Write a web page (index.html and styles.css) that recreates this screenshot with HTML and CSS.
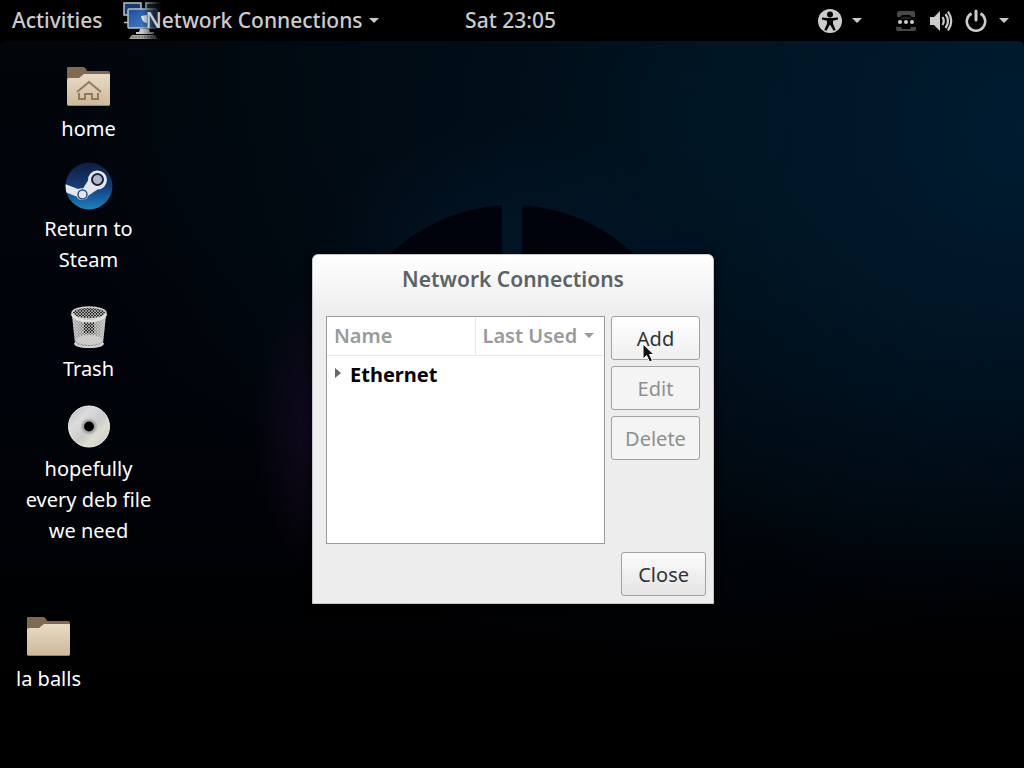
FILE: index.html
```html
<!DOCTYPE html>
<html lang="en">
<head>
<meta charset="utf-8">
<title>Network Connections</title>
<link rel="stylesheet" href="styles.css">
</head>
<body>
<header class="panel">
  <nav class="panel-left">
    <button class="panel-button">Activities</button>
    <button class="panel-button app-menu">
      <svg class="app-icon" width="38" height="38" viewBox="0 0 38 38" aria-hidden="true">
        <defs>
          <linearGradient id="screen" x1="0" y1="0" x2="1" y2="1"><stop offset="0" stop-color="#1c4f9c"/><stop offset="1" stop-color="#4a86cf"/></linearGradient>
        </defs>
        <g stroke="#b9c4c4" stroke-width="1.5">
          <rect x="1" y="1" width="17" height="12" fill="#173c70"/>
          <rect x="23" y="1" width="14" height="12" fill="#222d3a"/>
          <path d="M1 20.500h5"/>
          <rect x="5" y="7" width="29" height="19" rx="1" fill="url(#screen)"/>
        </g>
        <path d="M18 14q1 7 6 7v-8z" fill="#dde5ee"/>
        <path d="M17 27h9l1 3h4v2H13v-2h3z" fill="#c9cbc8"/>
        <path d="M9 33h23l3 4H6z" fill="#a5a7a3"/>
        <path d="M9 35h22" stroke="#555" stroke-dasharray="2 1"/>
      </svg>
      <span class="app-name">Network Connections</span>
      <svg width="10" height="5" viewBox="0 0 10 5" aria-hidden="true"><path d="M0 0h10L5 5z" fill="currentColor"/></svg>
    </button>
  </nav>
  <button class="panel-button clock">Sat 23:05</button>
  <div class="panel-right">
    <button class="panel-button a11y" aria-label="Accessibility">
      <svg width="24" height="24" viewBox="0 0 24 24"><circle cx="12" cy="12" r="12" fill="currentColor"/><circle cx="12" cy="5.500" r="3" fill="#000"/><path d="M4 8.500l6 .5h4l6-.5v2l-5 1.200v3L17.700 21l-2.200.8L12.300 16h-.6l-3.200 5.800-2.200-.8L9 14.700v-3l-5-1.200z" fill="#000"/></svg>
      <svg width="10" height="5" viewBox="0 0 10 5"><path d="M0 0h10L5 5z" fill="currentColor"/></svg>
    </button>
    <button class="panel-button system" aria-label="System menu">
      <svg width="22" height="22" viewBox="0 0 22 22"><path d="M2 7V3q0-2 2-2h14q2 0 2 2v4h-3.500L15 5H7L5.500 7zM1 17h5l1 2h8l1-2h5v2q0 2-2 2H3q-2 0-2-2z" fill="#484848"/><path d="M5 9l2-2h8l2 2z" fill="#222"/><g fill="currentColor"><circle cx="5" cy="12" r="2"/><circle cx="11" cy="12" r="2"/><circle cx="17" cy="12" r="2"/></g></svg>
      <svg width="24" height="22" viewBox="0 0 24 22"><path d="M1 7h4l6-6v20l-6-6H1z" fill="currentColor"/><g fill="none" stroke="currentColor" stroke-width="2.200"><path d="M13.500 7q2.500 4 0 8"/><path d="M16.500 4q5 7 0 14"/><path d="M19 1.500q6.500 9.500 0 19"/></g></svg>
      <svg width="22" height="24" viewBox="0 0 22 24"><g fill="none" stroke="currentColor" stroke-width="2.600"><path d="M6.500 4.500a9.200 9.200 0 1 0 9 0"/><path d="M11 2v9" stroke-linecap="round" stroke-width="3"/></g></svg>
      <svg width="10" height="5" viewBox="0 0 10 5"><path d="M0 0h10L5 5z" fill="currentColor"/></svg>
    </button>
  </div>
</header>

<main class="desktop">
  <svg class="emblem" width="352" height="352" viewBox="0 0 352 352" aria-hidden="true">
    <path d="M166 .3A176 176 0 0 0 166 351.700zM186 .3A176 176 0 0 1 186 351.700z" fill="#01030c"/>
  </svg>

  <a class="launcher home" href="#home">
    <svg width="48" height="48" viewBox="0 0 48 48" aria-hidden="true">
      <defs><linearGradient id="paper" x1="0" y1="0" x2="0" y2="1"><stop offset="0" stop-color="#e9dbc5"/><stop offset="1" stop-color="#cdb898"/></linearGradient></defs>
      <path d="M2 17V6q0-1 1-1h15q2 0 3 2l1 2h21q2 0 2 2v10H2z" fill="#806a50"/>
      <path d="M2 18q0-2 2-2h10l5-4h25q1 0 1 1v29q0 2-2 2H4q-2 0-2-2z" fill="url(#paper)"/>
      <path d="M3 43.500h41" stroke="#9a8567"/>
      <path d="M12 30l12-10 12 10M14 31v6h6v-5h7v5h6v-6" fill="none" stroke="#927b5c" stroke-width="2"/>
    </svg>
    <span>home</span>
  </a>
  <a class="launcher steam" href="#steam">
    <svg width="48" height="48" viewBox="0 0 48 48" aria-hidden="true">
      <defs>
        <linearGradient id="sky" x1="0" y1="0" x2="0" y2="1"><stop offset="0" stop-color="#111b3a"/><stop offset=".5" stop-color="#123d77"/><stop offset="1" stop-color="#1c83c0"/></linearGradient>
        <clipPath id="disk"><circle cx="24" cy="24" r="23.500"/></clipPath>
      </defs>
      <g clip-path="url(#disk)">
        <rect width="48" height="48" fill="url(#sky)"/>
        <path d="M0 22l13 5q3-1 5-.5l5-8a9.500 9.500 0 1 1 9.500 9l-9 6a6.500 6.500 0 0 1-12 1L0 30z" fill="#e4e6ec"/>
      </g>
      <circle cx="32.500" cy="17.500" r="5.500" fill="#aeb7c6" stroke="#19243e" stroke-width="2"/>
      <circle cx="17.500" cy="32.500" r="4.500" fill="none" stroke="#2b508c" stroke-width="1.500"/>
    </svg>
    <span>Return to Steam</span>
  </a>
  <a class="launcher trash" href="#trash">
    <svg width="48" height="48" viewBox="0 0 48 48" aria-hidden="true">
      <defs>
        <linearGradient id="tin" x1="0" y1="0" x2="1" y2="0"><stop offset="0" stop-color="#b4b4b1"/><stop offset=".4" stop-color="#80807e"/><stop offset=".6" stop-color="#858583"/><stop offset="1" stop-color="#bdbdba"/></linearGradient>
        <pattern id="mesh" width="3" height="3" patternUnits="userSpaceOnUse"><path d="M0 0l3 3M3 0L0 3" stroke="#d9d9d6" stroke-width=".6"/></pattern>
      </defs>
      <path d="M7 13l3 28q0 4 14 4t14-4l3-28z" fill="url(#tin)"/>
      <path d="M19 17h10v14H19z" fill="#30302f"/>
      <ellipse cx="24" cy="38" rx="13" ry="5" fill="#c5c5c2"/>
      <path d="M7 13l3 28q0 4 14 4t14-4l3-28z" fill="url(#mesh)"/>
      <ellipse cx="24" cy="11" rx="17" ry="6" fill="#353534"/>
      <ellipse cx="24" cy="11" rx="17" ry="6" fill="url(#mesh)" stroke="#d4d4d1" stroke-width="1.500"/>
      <path d="M7 12q3 7 17 7t17-7" fill="none" stroke="#e1e1de" stroke-width="3"/>
      <path d="M10 41q0 4 14 4t14-4" fill="none" stroke="#d5d5d2" stroke-width="2"/>
    </svg>
    <span>Trash</span>
  </a>
  <a class="launcher disc" href="#disc">
    <svg width="48" height="48" viewBox="0 0 48 48" aria-hidden="true">
      <defs><linearGradient id="foil" x1="0" y1="0" x2="1" y2="1"><stop offset="0" stop-color="#b8b8b8"/><stop offset=".3" stop-color="#dcdcdc"/><stop offset=".55" stop-color="#cacaca"/><stop offset=".7" stop-color="#dedecf"/><stop offset="1" stop-color="#c4c4c4"/></linearGradient></defs>
      <circle cx="24" cy="24.500" r="20.500" fill="url(#foil)" stroke="#eee" stroke-width="1"/>
      <circle cx="24" cy="24.500" r="7.500" fill="#a9a9aa" stroke="#bbb"/>
      <circle cx="24" cy="24.500" r="5" fill="#000"/>
    </svg>
    <span>hopefully every deb file we need</span>
  </a>
  <a class="launcher folder" href="#folder">
    <svg width="48" height="48" viewBox="0 0 48 48" aria-hidden="true">
      <path d="M2 17V6q0-1 1-1h15q2 0 3 2l1 2h21q2 0 2 2v10H2z" fill="#806a50"/>
      <path d="M2 18q0-2 2-2h10l5-4h25q1 0 1 1v29q0 2-2 2H4q-2 0-2-2z" fill="url(#paper)"/>
      <path d="M3 43.500h41" stroke="#9a8567"/>
    </svg>
    <span>la balls</span>
  </a>

  <section class="dialog" role="dialog" aria-labelledby="dialog-title">
    <h1 class="dialog-title" id="dialog-title">Network Connections</h1>
    <div class="dialog-body">
      <div class="list">
        <table class="connections">
          <thead>
            <tr>
              <th class="col-name" scope="col">Name</th>
              <th scope="col">Last Used<svg class="sort" width="10" height="5" viewBox="0 0 10 5" aria-hidden="true"><path d="M0 0h10L5 5z" fill="currentColor"/></svg></th>
            </tr>
          </thead>
          <tbody>
            <tr><td colspan="2"><svg class="expander" width="6" height="10" viewBox="0 0 6 10" aria-hidden="true"><path d="M0 0l6 5-6 5z" fill="#666"/></svg>Ethernet</td></tr>
          </tbody>
        </table>
      </div>
      <div class="actions">
        <button class="button">Add</button>
        <button class="button" disabled>Edit</button>
        <button class="button" disabled>Delete</button>
      </div>
    </div>
    <footer class="dialog-footer"><button class="button close">Close</button></footer>
  </section>

  <svg class="pointer" width="14" height="20" viewBox="0 0 14 20" aria-hidden="true"><path d="M1 1v15l3.500-3.500L7.500 19l3-1.500-3-6H12z" fill="#111" stroke="#fff"/></svg>
</main>
</body>
</html>
```

FILE: styles.css
```css
* { box-sizing: border-box; }

body {
  margin: 0;
  min-height: 100vh;
  display: flex;
  flex-direction: column;
  font: 20px/31px "Noto Sans", "Open Sans", sans-serif;
  background: #000;
  color: #fff;
}

button { font: inherit; color: inherit; }

.panel {
  display: grid;
  grid-template-columns: 1fr auto 1fr;
  align-items: center;
  height: 41px;
  padding: 0 15px 0 12px;
  color: #ccc;
  font-size: 21px;
  font-weight: 500;
}

.panel-left, .panel-right { display: flex; align-items: center; }
.panel-left { gap: 20px; }
.panel-right { justify-content: flex-end; gap: 33px; }

.panel-button {
  display: flex;
  align-items: center;
  padding: 0;
  border: 0;
  background: none;
  white-space: nowrap;
}

.app-icon {
  flex: none;
  margin-right: -15px;
  -webkit-mask-image: linear-gradient(90deg, #000 50%, transparent);
  mask-image: linear-gradient(90deg, #000 50%, transparent);
}
.app-name { position: relative; margin-right: 6px; }
.a11y { gap: 10px; }
.system { gap: 12px; }

.desktop {
  position: relative;
  flex: 1;
  overflow: hidden;
  border-radius: 6px 6px 0 0;
  background:
    radial-gradient(ellipse 60px 150px at 315px 390px, rgba(30, 10, 42, .6), transparent),
    radial-gradient(ellipse 190px 130px at 512px 210px, rgba(5, 26, 52, .6), transparent),
    radial-gradient(ellipse 480px 500px at 100% 12%, #001c31, transparent),
    radial-gradient(ellipse 620px 560px at 68% 10%, #00121e, transparent),
    linear-gradient(#01060b, #00040a 45%, #000 90%);
}

.emblem { position: absolute; top: 164px; left: calc(50% - 176px); }

.launcher {
  position: absolute;
  left: 18px;
  width: 141px;
  display: flex;
  flex-direction: column;
  align-items: center;
  gap: 3px;
  color: #fff;
  text-align: center;
  text-decoration: none;
}
.home { top: 21px; }
.steam { top: 121px; }
.steam span { width: 100px; }
.trash { top: 261px; }
.disc { top: 361px; }
.folder { top: 571px; left: -22px; }

.dialog {
  position: absolute;
  top: 213px;
  left: calc(50% - 200px);
  width: 402px;
  border: 1px solid #c8c8c8;
  border-radius: 6px 6px 0 0;
  background: linear-gradient(#fff, #ededed 60px);
  box-shadow: 0 2px 8px #000;
  color: #2e3436;
}
.dialog-title {
  margin: 0;
  padding: 9px 0 21px;
  font-size: 21px;
  line-height: 31px;
  font-weight: 600;
  text-align: center;
  color: #5a6365;
}
.dialog-body { display: flex; gap: 6px; padding: 0 13px; }
.list { flex: 1; height: 228px; border: 1px solid #999; background: #fff; }

.connections { width: 100%; border-collapse: collapse; table-layout: fixed; }
.connections th {
  height: 38px;
  padding: 0 0 0 7px;
  border-bottom: 1px solid #e8e8e8;
  text-align: left;
  font-weight: 600;
  color: #989b9b;
  white-space: nowrap;
}
.connections .col-name { width: 148px; border-right: 1px solid #e8e8e8; }
.connections td { height: 38px; padding: 0 0 0 8px; font-weight: 700; color: #000; }
.sort { margin-left: 7px; vertical-align: 5px; }
.expander { margin-right: 9px; vertical-align: 4px; }

.actions { display: flex; flex-direction: column; gap: 6px; width: 89px; }
.button {
  height: 44px;
  padding: 0 16px;
  border: 1px solid #a1a1a1;
  border-radius: 3px;
  background: linear-gradient(#fcfcfc, #e4e4e4);
  color: #2e3436;
}
.actions .button { padding: 0; background: linear-gradient(#fff, #efefef); }
.actions .button:disabled { background: #f4f4f4; color: #8d9091; }
.dialog-footer { display: flex; justify-content: flex-end; padding: 8px 7px 7px; }

.pointer { position: absolute; top: 302px; left: calc(50% + 130px); }
```
